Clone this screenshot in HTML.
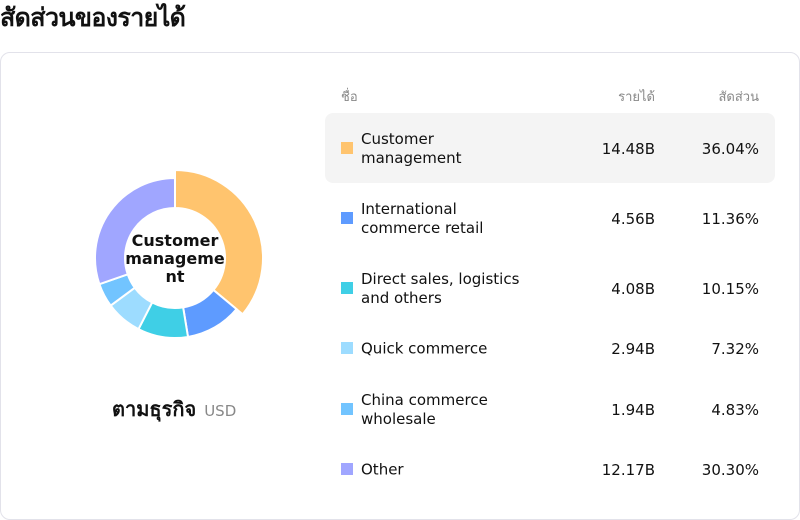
<!DOCTYPE html>
<html><head><meta charset="utf-8"><style>
*{margin:0;padding:0;box-sizing:border-box}
body{width:800px;height:520px;background:#fff;font-family:"DejaVu Sans","Liberation Sans","Noto Sans CJK SC",sans-serif;color:#111;position:relative;overflow:hidden}
h1{position:absolute;left:0;top:-2px;font-size:25px;font-weight:bold;letter-spacing:-0.6px;font-family:"DejaVu Sans",sans-serif}
.card{position:absolute;left:0;top:52px;width:800px;height:468px;border:1px solid #e2e2ea;border-radius:10px}
.hdr{position:absolute;top:86px;font-size:13px;color:#888}
.row{position:absolute;left:325px;width:450px;height:70px}
.row.sel{background:#f4f4f4;border-radius:8px}
.sq{position:absolute;left:16px;width:12px;height:12px;top:29px}
.nm{position:absolute;left:36px;font-size:15px;line-height:19px;top:50%;transform:translateY(-50%);width:190px;margin-top:1px}
.v{position:absolute;font-size:15px;top:50%;transform:translateY(-50%);text-align:right;margin-top:1px}
.c1{right:120px}.c2{right:16px}
.center{position:absolute;left:110px;top:232px;width:130px;text-align:center;font-weight:bold;font-size:16px;line-height:18px}
.bot{position:absolute;left:112px;top:393px;font-size:20px;font-weight:bold}
.bot span{font-size:15px;color:#888;font-weight:normal;margin-left:8px}
</style></head><body>
<h1>สัดส่วนของรายได้</h1>
<div class="card"></div>
<svg id="d" width="800" height="520" style="position:absolute;left:0;top:0"></svg>
<div class="center">Customer<br>manageme<br>nt</div>
<div class="bot">ตามธุรกิจ<span>USD</span></div>
<div class="hdr" style="left:341px">ชื่อ</div>
<div class="hdr" style="right:145px">รายได้</div>
<div class="hdr" style="right:41px">สัดส่วน</div>
<div class="row sel" style="top:113px"><div class="sq" style="background:#ffc46e"></div><div class="nm">Customer<br>management</div><div class="v c1">14.48B</div><div class="v c2">36.04%</div></div>
<div class="row" style="top:183px"><div class="sq" style="background:#5e9bff"></div><div class="nm">International<br>commerce retail</div><div class="v c1">4.56B</div><div class="v c2">11.36%</div></div>
<div class="row" style="top:253px"><div class="sq" style="background:#3fcfe6"></div><div class="nm">Direct sales, logistics<br>and others</div><div class="v c1">4.08B</div><div class="v c2">10.15%</div></div>
<div class="row" style="top:313px"><div class="sq" style="background:#9ddcff"></div><div class="nm">Quick commerce</div><div class="v c1">2.94B</div><div class="v c2">7.32%</div></div>
<div class="row" style="top:374px"><div class="sq" style="background:#72c4ff"></div><div class="nm">China commerce<br>wholesale</div><div class="v c1">1.94B</div><div class="v c2">4.83%</div></div>
<div class="row" style="top:434px"><div class="sq" style="background:#a0a6ff"></div><div class="nm">Other</div><div class="v c1">12.17B</div><div class="v c2">30.30%</div></div>
<script>
var d=[[36.04,'#ffc46e'],[11.36,'#5e9bff'],[10.15,'#3fcfe6'],[7.32,'#9ddcff'],[4.83,'#72c4ff'],[30.30,'#a0a6ff']];
var cx=175,cy=258,ri=50,a=-Math.PI/2,s='';
d.forEach(function(e,i){var ro=i==0?88:80;var b=a+e[0]/100*2*Math.PI;
function p(r,t){return (cx+r*Math.cos(t)).toFixed(2)+' '+(cy+r*Math.sin(t)).toFixed(2)}
var l=(b-a)>Math.PI?1:0;
s+='<path d="M'+p(ro,a)+' A'+ro+' '+ro+' 0 '+l+' 1 '+p(ro,b)+' L'+p(ri,b)+' A'+ri+' '+ri+' 0 '+l+' 0 '+p(ri,a)+' Z" fill="'+e[1]+'" stroke="#fff" stroke-width="2"/>';a=b;});
document.getElementById('d').innerHTML=s;
</script>
</body></html>
